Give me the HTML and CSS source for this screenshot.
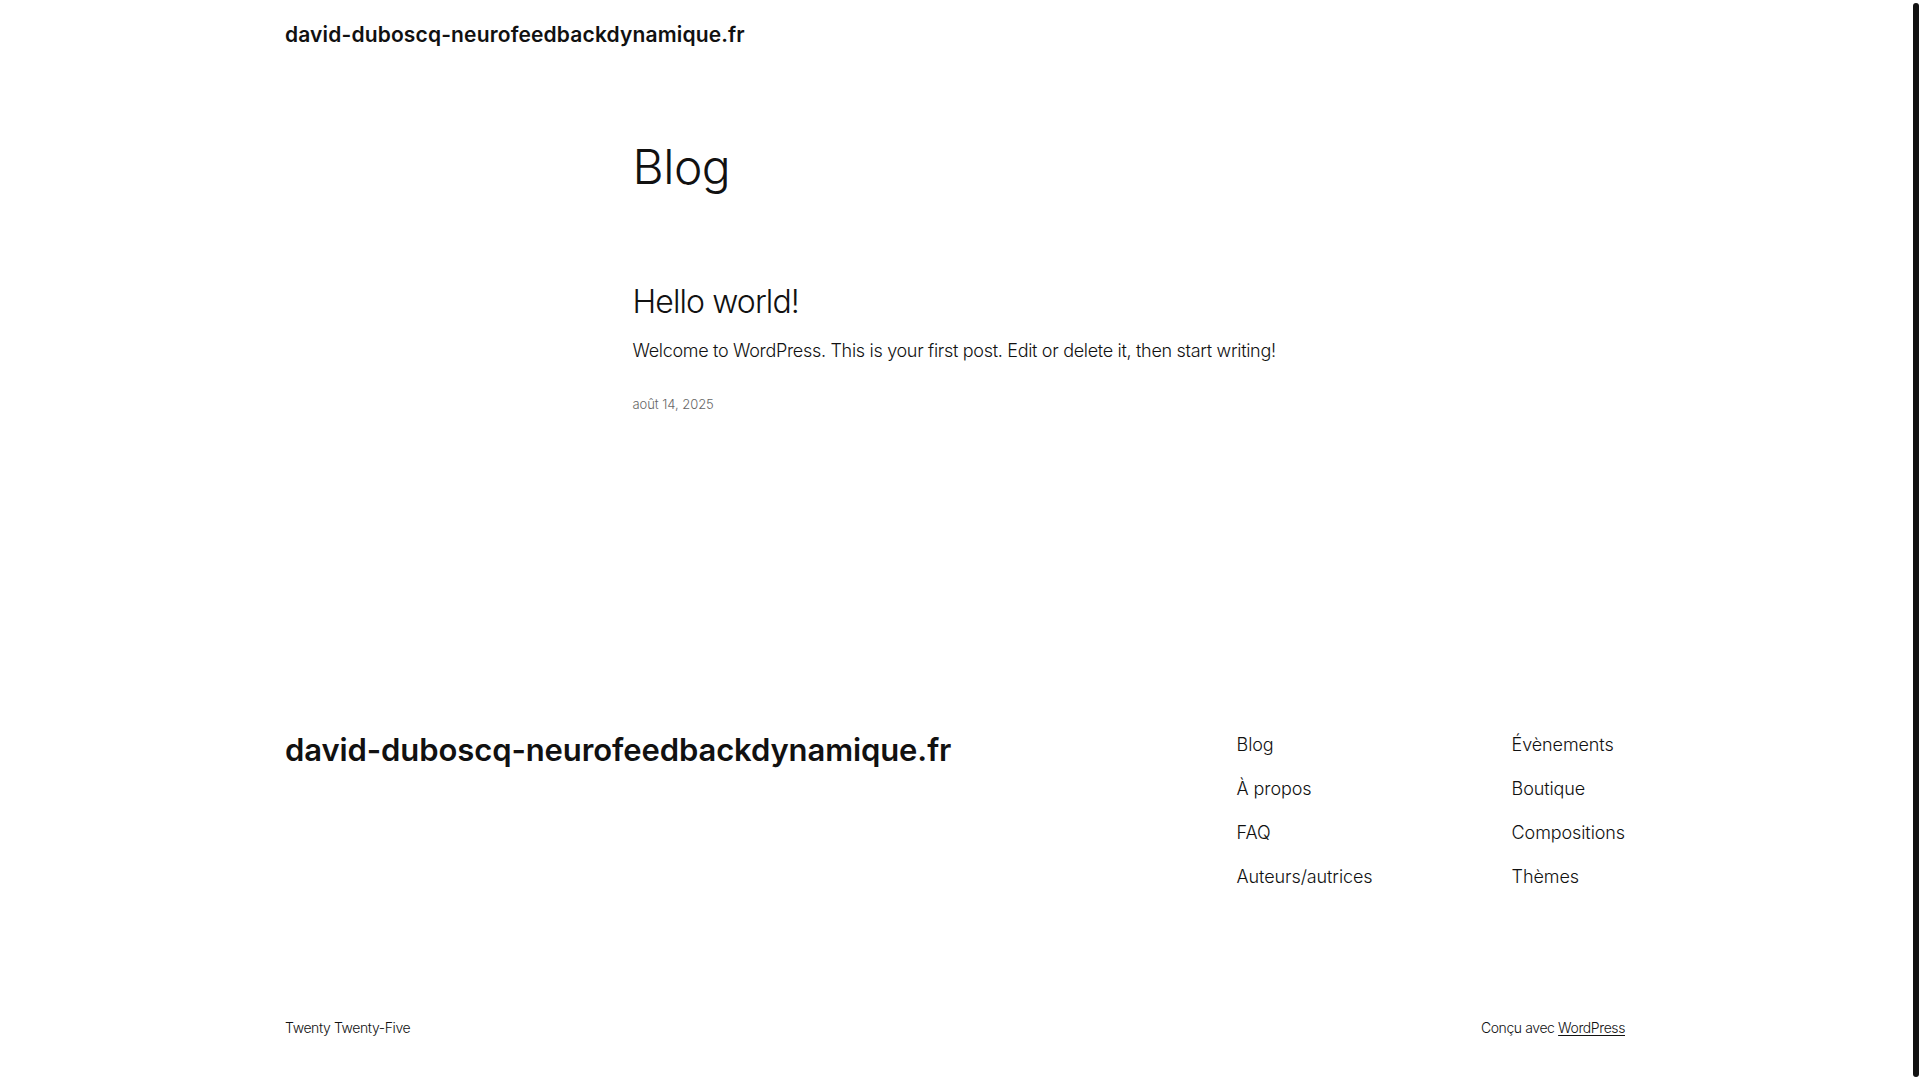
FILE: index.html
```html
<!DOCTYPE html>
<html lang="fr">
<head>
<meta charset="utf-8">
<title>Blog – david-duboscq-neurofeedbackdynamique.fr</title>
<link rel="stylesheet" href="styles.css">
</head>
<body>
<header class="site-header">
  <div class="wide">
    <a class="site-title" href="#">david-duboscq-neurofeedbackdynamique.fr</a>
  </div>
</header>
<main class="main">
  <div class="content">
    <h1 class="page-title">Blog</h1>
    <article class="post">
      <h2 class="post-title"><a href="#">Hello world!</a></h2>
      <p class="post-excerpt">Welcome to WordPress. This is your first post. Edit or delete it, then start writing!</p>
      <time class="post-date">août 14, 2025</time>
    </article>
  </div>
</main>
<footer class="site-footer">
  <div class="wide footer-top">
    <a class="footer-title" href="#">david-duboscq-neurofeedbackdynamique.fr</a>
    <nav class="footer-nav">
      <ul class="nav-col nav-col-first">
        <li><a href="#">Blog</a></li>
        <li><a href="#">À propos</a></li>
        <li><a href="#">FAQ</a></li>
        <li><a href="#">Auteurs/autrices</a></li>
      </ul>
      <ul class="nav-col">
        <li><a href="#">Évènements</a></li>
        <li><a href="#">Boutique</a></li>
        <li><a href="#">Compositions</a></li>
        <li><a href="#">Thèmes</a></li>
      </ul>
    </nav>
  </div>
  <div class="wide footer-bottom">
    <p class="credit">Twenty Twenty-Five</p>
    <p class="credit">Conçu avec <a class="wp-link" href="#">WordPress</a></p>
  </div>
</footer>
<div class="scrollbar" aria-hidden="true"><div class="scrollbar-thumb"></div></div>
</body>
</html>
```

FILE: styles.css
```css
body {
  margin: 0 10px 0 0;
  background: #ffffff;
  color: #111111;
  font-family: Inter, "Noto Sans", sans-serif;
  font-weight: 300;
}
a {
  color: inherit;
  text-decoration: none;
}
.scrollbar {
  position: fixed;
  top: 0;
  right: 0;
  width: 15px;
  height: 100vh;
  background: #ffffff;
  padding: 3px 1px 3px 8px;
  box-sizing: border-box;
}
.scrollbar-thumb {
  width: 100%;
  height: 100%;
  background: #111111;
  border-radius: 4px;
}
.wide {
  width: 1340px;
  margin: 0 auto;
}
.site-header {
  padding: 21px 0 19px;
}
.site-title {
  display: block;
  font-size: 21px;
  line-height: 28px;
  font-weight: 600;
  letter-spacing: 0.15px;
}
.main {
  padding-top: 72px;
}
.content {
  width: 645px;
  margin: 0 auto;
}
.page-title {
  margin: 0;
  font-size: 48px;
  line-height: 54px;
  font-weight: 300;
  letter-spacing: -0.5px;
}
.post {
  margin-top: 90px;
  display: flex;
  flex-direction: column;
}
.post-title {
  margin: 0;
  font-size: 32px;
  line-height: 36px;
  font-weight: 300;
  letter-spacing: -0.9px;
}
.post-excerpt {
  margin: 18px 0 0;
  font-size: 18px;
  line-height: 25px;
  letter-spacing: -0.31px;
}
.post-date {
  margin-top: 31px;
  font-size: 13px;
  line-height: 20px;
  color: #666666;
  letter-spacing: -0.05px;
}
.site-footer {
  padding-top: 318px;
  padding-bottom: 36px;
}
.footer-top {
  display: flex;
  justify-content: space-between;
  align-items: flex-start;
}
.footer-title {
  font-size: 31px;
  line-height: 36px;
  font-weight: 600;
  letter-spacing: -0.1px;
}
.footer-nav {
  display: flex;
}
.nav-col {
  list-style: none;
  margin: 0;
  padding: 0;
  display: flex;
  flex-direction: column;
  gap: 19px;
  font-size: 18px;
  line-height: 25px;
  letter-spacing: -0.1px;
}
.nav-col-first {
  width: 275px;
}
.footer-bottom {
  margin-top: 129px;
  display: flex;
  justify-content: space-between;
}
.credit {
  margin: 0;
  font-size: 14px;
  line-height: 20px;
  letter-spacing: -0.4px;
}
.wp-link {
  text-decoration: underline;
  text-underline-offset: 2px;
}
```
